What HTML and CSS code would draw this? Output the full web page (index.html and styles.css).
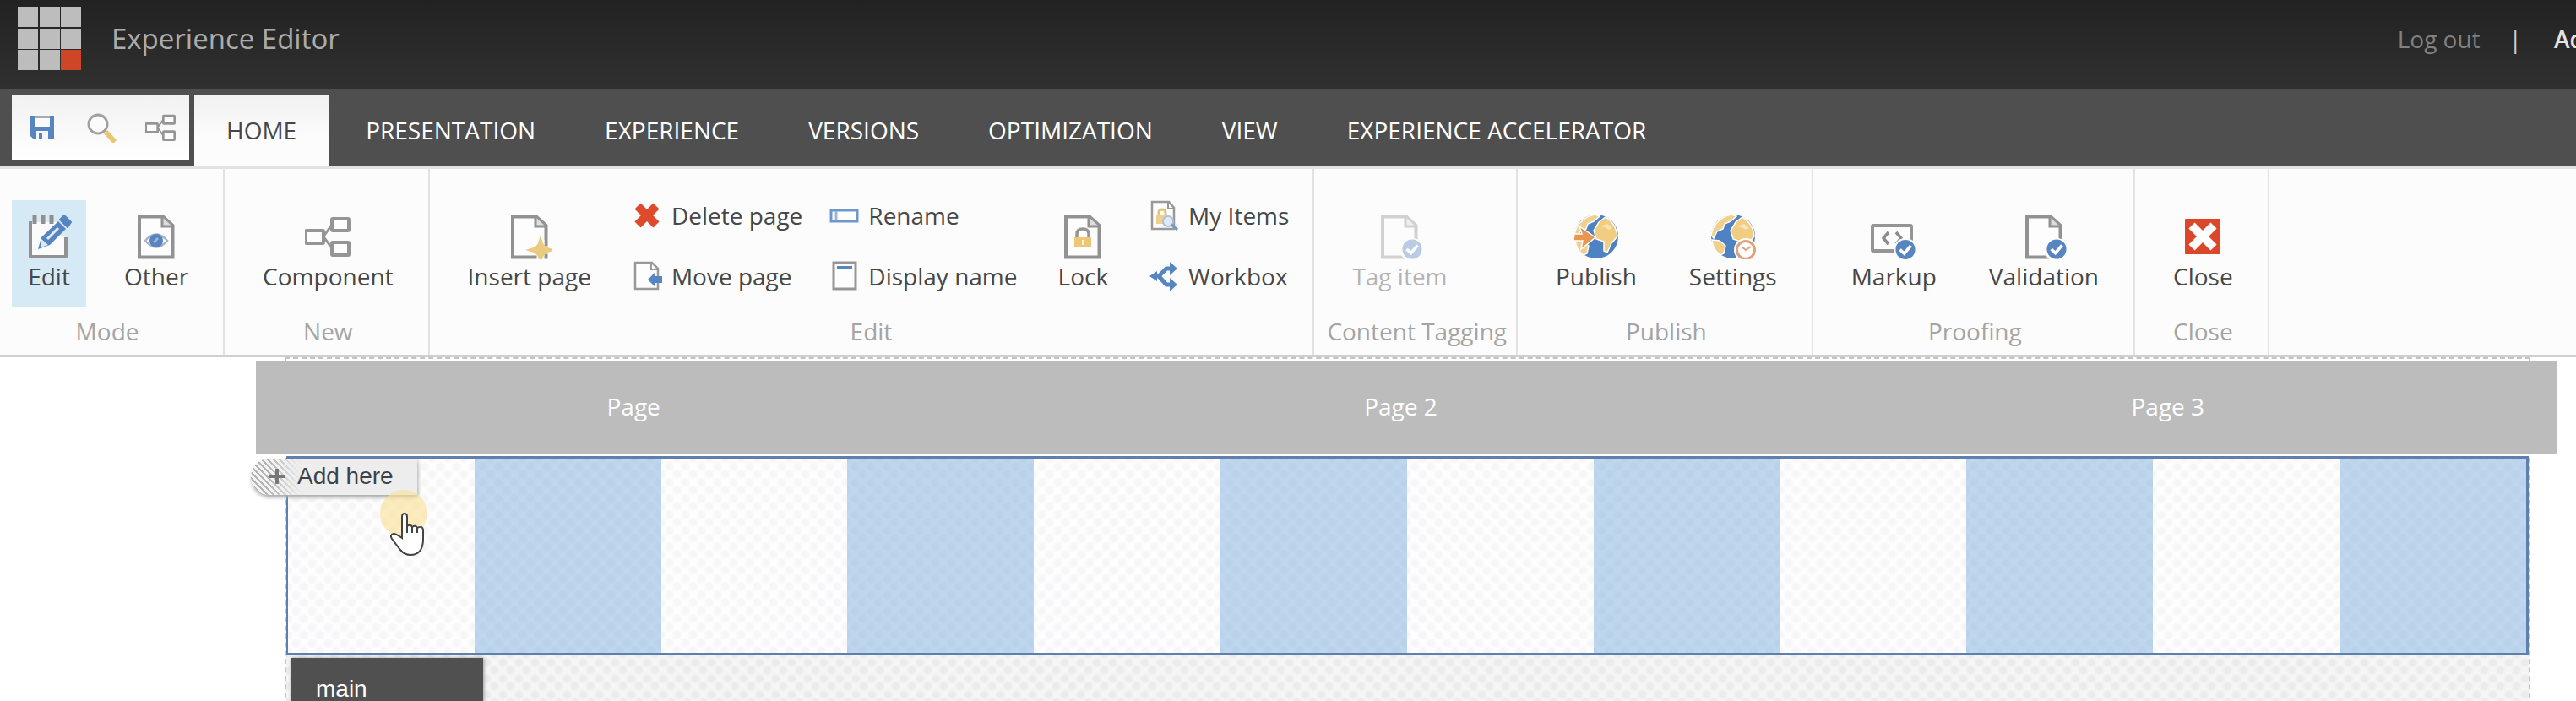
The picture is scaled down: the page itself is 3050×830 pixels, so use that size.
FILE: index.html
```html
<!DOCTYPE html>
<html lang="en">
<head>
<meta charset="utf-8">
<title>Experience Editor</title>
<link rel="stylesheet" href="styles.css">
</head>
<body>
<svg class="defs" aria-hidden="true">
  <symbol id="doc" viewBox="0 0 54 54">
    <path d="M7 3.5H32L46.500 17V51.500H7Z" fill="#fdfdfd"/>
    <path d="M7 3.500H35L46.500 14V51.500H7Z" fill="none" stroke="#929292" stroke-width="4"/>
    <path d="M34 4V15H46" fill="#ddd" stroke="#929292" stroke-width="3"/>
  </symbol>
  <symbol id="nodes" viewBox="0 0 54 54">
    <path d="M22 27L32 13M22 27L32 41" stroke="#959595" stroke-width="3" fill="none"/>
    <g fill="#fdfdfd" stroke="#959595" stroke-width="4"><rect x="1" y="20" width="21" height="15" rx="1"/><rect x="32" y="6" width="20" height="14" rx="1"/><rect x="32" y="34" width="20" height="15" rx="1"/></g>
  </symbol>
  <symbol id="check" viewBox="0 0 26 26">
    <circle cx="13" cy="13" r="12.500" fill="#5685c0"/>
    <path d="M6 13L11.500 18L20 8" fill="none" stroke="#fff" stroke-width="4"/>
  </symbol>
  <symbol id="globe" viewBox="0 0 54 54">
    <circle cx="27" cy="27" r="26" fill="#4f82c2"/>
    <path d="M3 18Q10 4 25 1L31 3L24 9L17 12L15 18L8 21L4 29L1 25Z" fill="#f0d08a" stroke="#fdfdfd" stroke-width="1.500"/>
    <path d="M2 31L11 32L18 38L16 47L12 49Q3 43 2 31Z" fill="#f0d08a" stroke="#fdfdfd" stroke-width="1.500"/>
    <path d="M30 10L38 4Q48 10 51 21L52 27L45 35L40 46L36 44L36 33L27 30L24 20Z" fill="#f0cd80" stroke="#fdfdfd" stroke-width="1.500"/>
    <path d="M31 15L40 12L46 17L42 19L37 16Z" fill="#f8e4b4"/>
  </symbol>
</svg>

<header class="topbar">
  <svg class="logo" viewBox="0 0 75 75" aria-hidden="true">
    <g fill="#bdbdbd"><path d="M0 0h24v24H0zM26 0h24v24H26zM51 0h24v24H51zM0 26h24v24H0zM26 26h24v24H26zM51 26h24v24H51zM0 51h24v24H0zM26 51h24v24H26z"/></g>
    <path d="M51 51h24v24H51z" fill="#cf4527"/>
  </svg>
  <h1 class="title">Experience Editor</h1>
  <div class="account">
    <a class="logout" href="#">Log out</a>
    <span class="bar">|</span>
    <span class="user">Administrator</span>
  </div>
</header>

<nav class="tabs">
  <div class="quick">
    <button class="quick-btn" aria-label="Save"><svg viewBox="0 0 36 36"><path d="M4 4H32V32H8L4 28Z" fill="#5685c0"/><path d="M9 4H27V17H9Z" fill="#fbfbfb"/><path d="M9 4H27V7H9Z" fill="#aaa"/><path d="M11 22H25V32H11Z" fill="#f3f6fa"/><path d="M14 24H18V32H14Z" fill="#5685c0"/></svg></button>
    <button class="quick-btn" aria-label="Search"><svg viewBox="0 0 36 36"><circle cx="14" cy="14" r="11" fill="#fbfbfb" stroke="#a0a0a0" stroke-width="3"/><path d="M23 23L34 35" stroke="#ebc774" stroke-width="6"/></svg></button>
    <button class="quick-btn" aria-label="Navigate"><svg viewBox="0 0 54 54"><use href="#nodes"/></svg></button>
  </div>
  <a class="tab active" href="#">HOME</a>
  <a class="tab" href="#">PRESENTATION</a>
  <a class="tab" href="#">EXPERIENCE</a>
  <a class="tab" href="#">VERSIONS</a>
  <a class="tab" href="#">OPTIMIZATION</a>
  <a class="tab" href="#">VIEW</a>
  <a class="tab" href="#">EXPERIENCE ACCELERATOR</a>
</nav>

<div class="ribbon">
  <section class="group first">
    <div class="tools">
      <button class="large selected"><svg viewBox="0 0 54 54"><path d="M5 9V51H47V28" fill="#fbfbfb" stroke="#929292" stroke-width="4" stroke-linejoin="round"/><path d="M7 10H40L14 49H7Z" fill="#fbfbfb"/><path d="M10 2V12M20 2V12M30 2V12" stroke="#909090" stroke-width="5"/><path d="M14 42L18 28L38 9L47 18L28 37Z" fill="#5685c0"/><path d="M18 30L26 37L17 40Z" fill="#dbe8f5"/><path d="M25 30L38 17" stroke="#e3eef8" stroke-width="3"/><path d="M40 7L45 2L53 10L49 16Z" fill="#5685c0" stroke="#5685c0" stroke-width="2" stroke-linejoin="round"/></svg><span>Edit</span></button>
      <button class="large"><svg viewBox="0 0 54 54"><use href="#doc"/><path d="M14 32Q27 17 40 32Q27 47 14 32Z" fill="#fff" stroke="#aab4c0" stroke-width="2.500"/><circle cx="27" cy="32" r="8" fill="#5685c0"/><path d="M24 34L29 29" stroke="#9bb9dd" stroke-width="2.500"/></svg><span>Other</span></button>
    </div>
    <h2 class="caption">Mode</h2>
  </section>
  <section class="group">
    <div class="tools">
      <button class="large"><svg viewBox="0 0 54 54"><use href="#nodes"/></svg><span>Component</span></button>
    </div>
    <h2 class="caption">New</h2>
  </section>
  <section class="group edit">
    <div class="tools">
      <button class="large"><svg viewBox="0 0 54 54"><use href="#doc"/><path d="M40 31V54M29 43H52" stroke="#fcfcfc" stroke-width="9"/><path d="M40 34Q42 41 49 43Q42 45 40 52Q38 45 31 43Q38 41 40 34Z" fill="#ebcb80" stroke="#ebcb80" stroke-width="5"/></svg><span>Insert page</span></button>
      <div class="stack">
        <button class="small"><svg viewBox="0 0 36 36"><path d="M7 7L29 29M29 7L7 29" stroke="#dd4a2c" stroke-width="10"/></svg><span>Delete page</span></button>
        <button class="small"><svg viewBox="0 0 36 36"><path d="M4 2H24L31 9V33H4Z" fill="#fdfdfd" stroke="#999" stroke-width="2.500"/><path d="M23 3V10H31" fill="none" stroke="#999" stroke-width="2"/><path d="M19 22L28 13V18H36V26H28V31Z" fill="#5685c0"/></svg><span>Move page</span></button>
      </div>
      <div class="stack">
        <button class="small"><svg viewBox="0 0 36 36"><rect x="3" y="12" width="31" height="13" fill="#fff" stroke="#6f98cc" stroke-width="3"/><path d="M9 13V24" stroke="#9ab6da" stroke-width="3"/></svg><span>Rename</span></button>
        <button class="small"><svg viewBox="0 0 36 36"><rect x="6" y="2" width="26" height="31" fill="#fdfdfd" stroke="#969696" stroke-width="3"/><path d="M10 8H28" stroke="#5685c0" stroke-width="4"/></svg><span>Display name</span></button>
      </div>
      <button class="large"><svg viewBox="0 0 54 54"><use href="#doc"/><path d="M20 30V24Q20 18 27 18Q34 18 34 24V30" fill="none" stroke="#969696" stroke-width="3.500"/><path d="M17 28H37V40H17Z" fill="#ebc878"/><path d="M27 31V37" stroke="#fff2cf" stroke-width="2"/></svg><span>Lock</span></button>
      <div class="stack">
        <button class="small"><svg viewBox="0 0 36 36"><path d="M4 2H24L30 9V34H4Z" fill="#fdfdfd" stroke="#999" stroke-width="2.500"/><path d="M23 3V10H30" fill="none" stroke="#999" stroke-width="2"/><path d="M12 19V15Q12 11 16 11Q20 11 20 15V19" fill="none" stroke="#e3c17a" stroke-width="3"/><path d="M9 18H22V28H9Z" fill="#efd08c"/><circle cx="23" cy="25" r="6" fill="#dfe9f7" stroke="#a9c1e2" stroke-width="2"/><path d="M27 29L34 35" stroke="#7897c4" stroke-width="3"/></svg><span>My Items</span></button>
        <button class="small"><svg viewBox="0 0 36 36"><path d="M6 18H12L21 9H28M12 18L21 28H28" fill="none" stroke="#5685c0" stroke-width="5"/><path d="M1 18L10 12V24ZM25 1L34 9L25 17ZM25 20L34 28L25 36Z" fill="#5685c0"/></svg><span>Workbox</span></button>
      </div>
    </div>
    <h2 class="caption">Edit</h2>
  </section>
  <section class="group tagging">
    <div class="tools">
      <button class="large" disabled><svg viewBox="0 0 54 54"><use href="#doc"/><circle cx="42" cy="43" r="14" fill="#fcfcfc"/><use href="#check" x="30" y="30" width="24" height="24"/></svg><span>Tag item</span></button>
    </div>
    <h2 class="caption">Content Tagging</h2>
  </section>
  <section class="group">
    <div class="tools">
      <button class="large"><svg viewBox="0 0 54 54"><use href="#globe"/><path d="M1 24H10L7 15L26 28L9 42L11 32H0Z" fill="#ea9550" stroke="#fdfdfd" stroke-width="1.500"/></svg><span>Publish</span></button>
      <button class="large"><svg viewBox="0 0 54 54"><use href="#globe"/><circle cx="42" cy="43" r="14" fill="#fdfdfd"/><circle cx="42" cy="43" r="10.500" fill="#fff" stroke="#dfa27c" stroke-width="3"/><path d="M37 39L42 43L48 39" fill="none" stroke="#dfa27c" stroke-width="2"/></svg><span>Settings</span></button>
    </div>
    <h2 class="caption">Publish</h2>
  </section>
  <section class="group">
    <div class="tools">
      <button class="large"><svg viewBox="0 0 54 54"><rect x="2" y="14" width="46" height="30" rx="1" fill="#fdfdfd" stroke="#959595" stroke-width="4"/><path d="M21 22L15 29L21 36M30 22L36 29L30 36" fill="none" stroke="#8c8c8c" stroke-width="3.500"/><circle cx="41" cy="43" r="14" fill="#fcfcfc"/><use href="#check" x="29" y="30" width="24" height="25"/></svg><span>Markup</span></button>
      <button class="large"><svg viewBox="0 0 54 54"><use href="#doc"/><circle cx="42" cy="43" r="14" fill="#fcfcfc"/><use href="#check" x="30" y="30" width="24" height="24"/></svg><span>Validation</span></button>
    </div>
    <h2 class="caption">Proofing</h2>
  </section>
  <section class="group">
    <div class="tools">
      <button class="large"><svg viewBox="0 0 54 54"><rect x="6" y="6" width="42" height="42" rx="1" fill="#dc4629"/><path d="M14 14L40 40M40 14L14 40" stroke="#fff" stroke-width="10"/></svg><span>Close</span></button>
    </div>
    <h2 class="caption">Close</h2>
  </section>
</div>

<main class="canvas">
  <div class="frame">
    <nav class="pages">
      <a href="#">Page</a>
      <a href="#">Page 2</a>
      <a href="#">Page 3</a>
    </nav>
    <div class="columns">
      <div></div><div></div><div></div><div></div><div></div><div></div><div></div><div></div><div></div><div></div><div></div><div></div>
      <button class="add"><svg viewBox="0 0 20 20" aria-hidden="true"><path d="M10 1V19M1 10H19" stroke="#777" stroke-width="4"/></svg>Add here</button>
      <span class="halo"></span>
      <svg class="pointer" viewBox="0 0 40 52" aria-hidden="true"><path d="M14 30V5Q14 1 17 1Q20 1 20 5V16Q24 13 26 17Q30 14 32 18Q38 15 39 20V33Q38 50 24 50Q17 50 12 44L2 31Q-1 26 4 25Q7 25 14 30Z" fill="#fff" stroke="#444" stroke-width="2"/><path d="M20 15V24M26 17V24M32 18V24" stroke="#444" stroke-width="2"/></svg>
    </div>
    <div class="placeholder">
      <div class="chip">main</div>
    </div>
  </div>
</main>
</body>
</html>
```
FILE: styles.css
```css
* {
  box-sizing: border-box;
}

body {
  margin: 0;
  min-height: 100vh;
  overflow: hidden;
  display: flex;
  flex-direction: column;
  background: #fff;
  color: #474747;
  font: 28px/36px "Open Sans", "Noto Sans", sans-serif;
}

a {
  color: inherit;
  text-decoration: none;
}

button {
  border: 0;
  padding: 0;
  background: none;
  color: inherit;
  font: inherit;
  white-space: nowrap;
}

.defs {
  position: absolute;
  width: 0;
  height: 0;
}

/* Top bar */
.topbar {
  display: flex;
  align-items: center;
  padding: 8px 0 22px 21px;
  overflow: hidden;
  background: linear-gradient(#222, #303030);
  white-space: nowrap;
}

.logo {
  width: 75px;
  height: 75px;
}

.title {
  margin: 0 0 0 36px;
  color: #ababab;
  font-size: 33px;
  line-height: 44px;
  font-weight: 400;
}

.account {
  display: flex;
  margin-left: auto;
  gap: 34px;
}

.logout {
  color: #808080;
}

.bar {
  margin-right: 4px;
  color: #d0d0d0;
}

.user {
  width: 26px;
  color: #e4e4e4;
  font-weight: 600;
}

/* Tabs */
.tabs {
  display: flex;
  align-items: flex-start;
  gap: 6px;
  padding: 8px 14px 0;
  background: #4f4f4f;
}

.quick {
  display: flex;
  justify-content: space-between;
  width: 210px;
  padding: 20px 16px 20px 18px;
  background: linear-gradient(#f1f1f1, #fff);
}

.quick-btn {
  height: 36px;
}

.quick-btn svg {
  display: block;
  width: 36px;
  height: 36px;
}

.tab {
  padding: 23px 38px 25px;
  color: #fff;
  white-space: nowrap;
}

.tab.active {
  background: linear-gradient(#f1f1f1, #fcfcfc 60%);
  color: #474747;
}

/* Ribbon */
.ribbon {
  display: flex;
  border-top: 3px solid #e2e2e2;
  border-bottom: 3px solid #cfcfcf;
  background: #fcfcfc;
}

.group {
  padding: 37px 24px 10px 28px;
  border-right: 2px solid #e2e2e2;
}

.group.first {
  padding-left: 14px;
}

.group.edit {
  padding-right: 28px;
}

.group.tagging {
  padding-right: 11px;
  padding-left: 15px;
}

.group.tagging .large {
  margin-left: 13px;
}

.tools {
  display: flex;
  gap: 28px;
}

.edit .tools {
  gap: 31px;
}

.large {
  display: flex;
  flex-direction: column;
  align-items: center;
  gap: 2px;
  padding: 16px 17px 19px;
}

.large svg {
  width: 54px;
  height: 54px;
}

.large.selected {
  background: #d6eaf6;
}

.large:disabled {
  color: #474747;
  opacity: 0.4;
}

.stack {
  display: flex;
  flex-direction: column;
  gap: 36px;
}

.small {
  display: flex;
  align-items: center;
  gap: 11px;
}

.small svg {
  width: 36px;
  height: 36px;
}

.caption {
  margin: 10px 0 0;
  color: #a4a4a4;
  font-size: 28px;
  line-height: 36px;
  font-weight: 400;
  text-align: center;
}

/* Page canvas */
.canvas {
  flex: 1;
  display: flex;
  padding: 0 54px 0 337px;
}

.frame {
  flex: 1;
  display: flex;
  flex-direction: column;
  border: 2px dashed #c4c4c4;
}

.pages {
  display: grid;
  grid-template-columns: repeat(3, 1fr);
  margin: 3px -34px 2px -36px;
  padding: 35px 0 39px;
  background: #bcbcbc;
  color: #fff;
  text-align: center;
}

.pages a {
  padding-right: 14px;
}

.columns {
  position: relative;
  display: grid;
  grid-template-columns: repeat(12, 1fr);
  height: 235px;
  border: 2px solid #5f7fae;
  border-top-width: 3px;
  border-right-width: 3px;
}

.columns > div {
  background:
    radial-gradient(circle, #f6f6f8 3px, transparent 7px) 0 0 / 19px 19px,
    radial-gradient(circle, #f6f6f8 3px, #fefefe 7px) 9px 9px / 19px 19px;
}

.columns > div:nth-child(even) {
  background:
    radial-gradient(circle, #b8d2ea 3px, transparent 7px) 0 0 / 19px 19px,
    radial-gradient(circle, #b8d2ea 3px, #bed7ee 7px) 9px 9px / 19px 19px;
}

.add {
  position: absolute;
  top: 0;
  left: -44px;
  display: flex;
  align-items: center;
  gap: 14px;
  padding: 3px 28px 4px 21px;
  border-radius: 22px 0 0 22px;
  background:
    linear-gradient(90deg, transparent 20px, #ededed 60px),
    repeating-linear-gradient(45deg, #f4f4f4 0 3px, #b4b4b4 3px 5px);
  box-shadow: 1px 3px 4px #aaa;
  color: #3e4248;
  font-family: "Liberation Sans", Arial, sans-serif;
}

.add svg {
  width: 20px;
  height: 20px;
}

.halo {
  position: absolute;
  top: 37px;
  left: 109px;
  width: 56px;
  height: 56px;
  border-radius: 50%;
  background: #fbdf9299;
}

.pointer {
  position: absolute;
  top: 64px;
  left: 121px;
  width: 40px;
  height: 52px;
}

.placeholder {
  flex: 1;
  display: flex;
  align-items: flex-start;
  padding: 4px 5px 0;
  background:
    radial-gradient(circle, #ebebeb 3px, transparent 7px) 0 0 / 19px 19px,
    radial-gradient(circle, #ebebeb 3px, #f6f6f6 7px) 9px 9px / 19px 19px;
}

.chip {
  width: 228px;
  padding: 19px 30px 0;
  background: #505050;
  box-shadow: 1px 0 4px #999;
  color: #fff;
  font-family: "Liberation Sans", Arial, sans-serif;
}
```
